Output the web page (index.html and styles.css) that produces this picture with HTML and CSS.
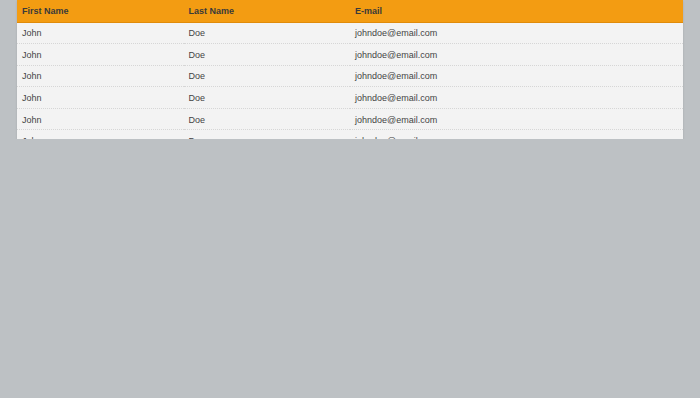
FILE: index.html
```html
<!DOCTYPE html>
<html>
<head>
<meta charset="utf-8">
<link rel="stylesheet" href="styles.css">
</head>
<body>
<div class="wrap">
  <table class="tbl">
    <thead>
      <tr><th class="c1">First Name</th><th class="c2">Last Name</th><th class="c3">E-mail</th></tr>
    </thead>
    <tbody>
      <tr><td>John</td><td>Doe</td><td>johndoe@email.com</td></tr>
      <tr><td>John</td><td>Doe</td><td>johndoe@email.com</td></tr>
      <tr><td>John</td><td>Doe</td><td>johndoe@email.com</td></tr>
      <tr><td>John</td><td>Doe</td><td>johndoe@email.com</td></tr>
      <tr><td>John</td><td>Doe</td><td>johndoe@email.com</td></tr>
      <tr><td>John</td><td>Doe</td><td>johndoe@email.com</td></tr>
      <tr><td>John</td><td>Doe</td><td>johndoe@email.com</td></tr>
    </tbody>
  </table>
</div>
</body>
</html>
```
FILE: styles.css
```css
html, body {
  margin: 0;
  padding: 0;
  background: #bdc1c4;
  font-family: "Liberation Sans", Arial, Helvetica, sans-serif;
}
.wrap {
  margin: 0 17px;
  height: 139px;
  overflow: hidden;
  background: #f3f3f3;
  box-shadow: 0 1px 2px rgba(0,0,0,0.12);
}
.tbl {
  width: 100%;
  border-collapse: collapse;
  table-layout: fixed;
  font-size: 9px;
}
.tbl th, .tbl td { box-sizing: border-box; }
.c1, .c2 { width: 25%; }
.c3 { width: 50%; }
.tbl th {
  background: #f39c12;
  color: #3a3a3a;
  font-weight: bold;
  text-align: left;
  padding: 1px 5px 0;
  height: 22px;
  border-bottom: 1px solid #e08b0a;
}
.tbl td {
  color: #444;
  padding: 1px 5px 0;
  height: 21.6px;
  border-bottom: 1px dotted #d6d6d6;
}
```
